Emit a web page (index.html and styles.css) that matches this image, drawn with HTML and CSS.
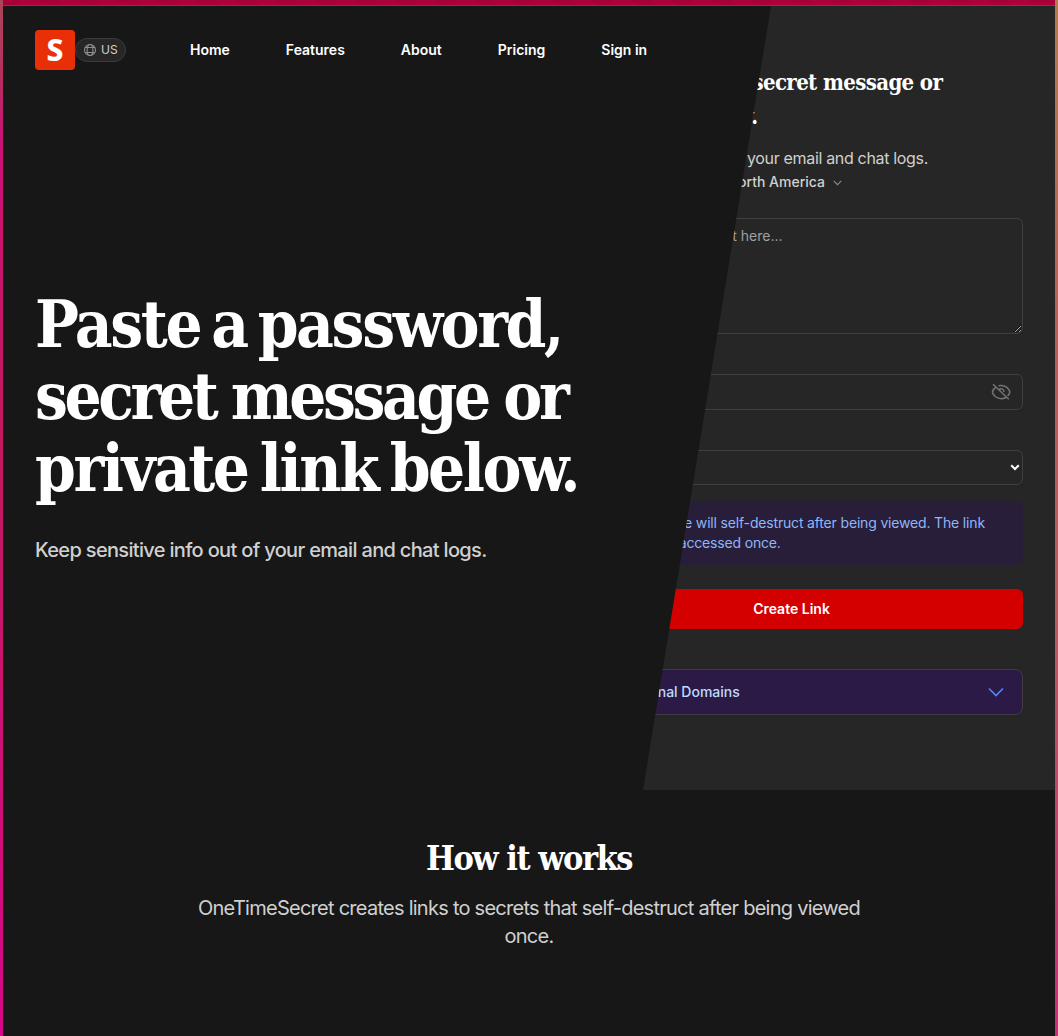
FILE: index.html
```
<!DOCTYPE html>
<html lang="en">
<head>
<meta charset="utf-8">
<title>Onetime Secret</title>
<link rel="stylesheet" href="styles.css">
</head>
<body>
<div class="frame">
  <div class="page">
    <div class="banner"></div>
    <section class="hero">
      <form class="secret-form">
        <h2 class="form-title"><span class="form-line">Paste a password, secret message or</span><span class="form-line last">private link below.</span></h2>
        <p class="form-sub">Keep sensitive info out of your email and chat logs.</p>
        <div class="region">
          <span class="region-text">Region: North America</span>
          <svg class="region-chevron" viewBox="0 0 24 24"><path d="M5 9l7 7 7-7"/></svg>
        </div>
        <textarea class="field message" placeholder="Enter the secret content here..."></textarea>
        <div class="field passphrase">
          <svg class="eye" viewBox="0 0 20 20"><path d="M2 2.2L17.8 17.3M5.5 4.6C3.3 6 1.8 8.1 1.4 10c.8 3.7 4.5 6.7 9 6.7 1.7 0 3.3-.5 4.6-1.2M7.5 3.7c.8-.2 1.6-.3 2.5-.3 4.4 0 8.1 3 8.9 6.6-.3 1.5-1.1 2.8-2.3 3.9M8.3 7.3C10.5 6 13 7.3 13 10"/></svg>
        </div>
        <div class="field expiry">
          <svg class="select-arrow" viewBox="0 0 10 7"><path d="M1.2 1.2L5 5l3.8-3.8"/></svg>
        </div>
        <div class="notice">Your message will self-destruct after being viewed. The link<br>can only be accessed once.</div>
        <button type="button" class="create">Create Link</button>
        <div class="domains">
          <span class="domains-text">About Regional Domains</span>
          <svg class="domains-chevron" viewBox="0 0 16 10"><path d="M1 1.5l7 7 7-7"/></svg>
        </div>
      </form>
      <div class="intro">
        <header class="nav">
          <a class="logo">S</a>
          <span class="locale">
            <svg class="globe" viewBox="0 0 14 14"><circle cx="7" cy="7" r="5.5"/><ellipse cx="7" cy="7" rx="2.9" ry="5.5"/><path d="M2 4.5h10M2 9.5h10"/></svg>
            US
          </span>
          <nav class="links"><a>Home</a><a>Features</a><a>About</a><a>Pricing</a><a>Sign in</a></nav>
        </header>
        <div class="pitch">
          <h1 class="headline"><span class="headline-line l1">Paste a password,</span><span class="headline-line l2">secret message or</span><span class="headline-line l3">private link below.</span></h1>
          <p class="tagline">Keep sensitive info out of your email and chat logs.</p>
        </div>
      </div>
    </section>
    <section class="how">
      <h2 class="how-title">How it works</h2>
      <p class="how-sub">OneTimeSecret creates links to secrets that self-destruct after being viewed once.</p>
    </section>
  </div>
</div>
</body>
</html>
```

FILE: styles.css
```
* { box-sizing: border-box; }
body { margin: 0; font-family: Inter, "Liberation Sans", sans-serif; color: #fff; -webkit-font-smoothing: antialiased; }
h1, h2, p { margin: 0; }
.frame {
  height: 1036px; padding: 0 3px; overflow: hidden;
  background:
    linear-gradient(#ab4658, #b5305f 7%, #ca1175 14%, #c3195f 42%, #c8166c 60%, #d9078a) left / 3px 100% no-repeat,
    linear-gradient(#b27b4b, #b85d58 35%, #b95a5e 60%, #ca2f78) right / 3px 100% no-repeat;
}
.page { height: 1036px; background: #171717; }
.banner {
  height: 6px; border-bottom: 1px solid #bd1750;
  background: repeating-linear-gradient(45deg, #a60037 0 14px, #ab0239 14px 28px);
}
.hero { position: relative; height: 784px; background: #262626; }
.secret-form { display: flex; flex-direction: column; width: 463px; margin-left: 557px; padding-top: 60px; }
.form-title, .headline, .how-title { font-family: "DejaVu Serif Condensed", "DejaVu Serif", serif; font-stretch: condensed; font-weight: 700; }
.form-title { font-size: 22px; line-height: 32px; height: 64px; letter-spacing: -.63px; white-space: nowrap; }
.form-line { display: block; }
.form-line.last { padding-top: 2px; letter-spacing: -.3px; }
.form-sub { margin-top: 16px; font-size: 16px; line-height: 24px; letter-spacing: -.33px; color: #d0d0d0; }
.region { display: flex; align-items: center; gap: 6px; height: 24px; font-size: 14px; font-weight: 500; color: #d0d0d0; }
.region-text { width: 265px; padding-bottom: 2px; text-align: right; white-space: nowrap; }
.region-chevron { width: 13px; height: 13px; fill: none; stroke: #8c8c8c; stroke-width: 2; }
.field { border: 1px solid #404040; border-radius: 6px; background: #262626; box-shadow: 0 1px 2px rgba(0,0,0,.06); }
.message { height: 116px; margin: 24px 0 0; padding: 7px 12px 7px 17px; font: 14px/20px Inter, sans-serif; color: #fff; }
.message::placeholder { color: #a0a0a0; }
.passphrase { display: flex; align-items: center; justify-content: flex-end; height: 36px; margin-top: 40px; padding-right: 11px; }
.eye { width: 20px; height: 20px; fill: none; stroke: #737373; stroke-width: 1.5; }
.expiry { display: flex; align-items: center; justify-content: flex-end; height: 35px; margin-top: 40px; padding-right: 2px; }
.select-arrow { width: 10px; height: 7px; fill: none; stroke: #fff; stroke-width: 2; }
.notice { height: 64px; margin-top: 16px; padding: 12px 0 12px 40px; border-radius: 6px; background: #281e3a; color: #8eb6f8; font-size: 14px; line-height: 20px; letter-spacing: -.17px; white-space: nowrap; }
.create { height: 40px; margin-top: 24px; border: 0; border-radius: 6px; background: #d40000; color: #fff; font: 600 14px/20px Inter, sans-serif; }
.domains { display: flex; align-items: center; justify-content: space-between; height: 46px; margin-top: 40px; padding: 0 18px 0 15px; border: 1px solid #403c42; border-radius: 8px; background: #2b1a45; color: #bedbff; font-size: 14px; font-weight: 500; }
.domains-text { padding-bottom: 2px; }
.domains-chevron { width: 16px; height: 10px; fill: none; stroke: #5086ff; stroke-width: 1.6; }
.intro { position: absolute; inset: 0 auto 0 0; width: 768px; background: #171717; clip-path: polygon(0 0, 768px 0, 640px 100%, 0 100%); }
.nav { display: flex; align-items: center; padding: 24px 32px 0; height: 64px; }
.logo { display: flex; align-items: center; justify-content: center; width: 40px; height: 40px; border-radius: 4px; background: #e92f08; font: 800 30px/40px "Noto Sans", sans-serif; }
.locale { display: flex; align-items: center; gap: 4px; width: 51px; height: 24px; padding: 0 0 1px 7px; border: 1px solid #3b3b3b; border-radius: 12px; background: #262626; color: #d0d0d0; font-size: 12px; }
.globe { width: 14px; height: 14px; fill: none; stroke: #8d8d8d; stroke-width: 1.1; }
.links { display: flex; gap: 56px; margin-left: 64px; font-size: 14px; font-weight: 600; line-height: 24px; white-space: nowrap; }
.pitch { padding: 218px 32px 0; }
.headline { font-size: 65px; line-height: 72px; white-space: nowrap; }
.headline-line { display: block; }
.l1 { letter-spacing: -2.4px; word-spacing: -7px; }
.l2 { letter-spacing: -3.4px; word-spacing: -1.5px; }
.l3 { letter-spacing: -2.5px; word-spacing: -5.5px; }
.tagline { margin-top: 30px; font-size: 20px; font-weight: 500; line-height: 32px; letter-spacing: -.67px; color: #d0d0d0; }
.how { padding-top: 48px; text-align: center; }
.how-title { font-size: 34px; line-height: 40px; letter-spacing: -1.5px; }
.how-sub { width: 672px; margin: 16px auto 0; font-size: 20px; line-height: 28px; letter-spacing: -.74px; color: #d0d0d0; }
```
